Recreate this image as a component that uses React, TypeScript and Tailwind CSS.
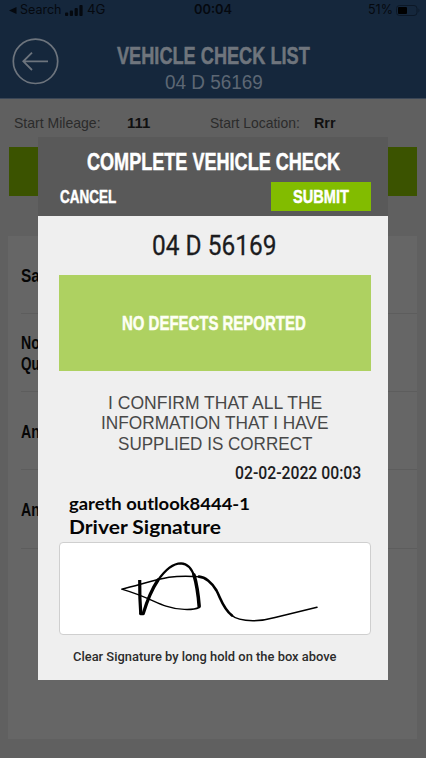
import { useLayoutEffect, useRef, useState } from "react";
import type { ReactNode } from "react";

const sans = "font-['Liberation_Sans',Arial,sans-serif]";
const din = "font-['Roboto',sans-serif]";
const ui = "font-['Inter',sans-serif]";
const human = "font-['Lato',sans-serif]";
const heavy = "[-webkit-text-stroke:0.5px_currentColor]";

/** One line of text, condensed or widened to fill exactly `width` pixels. */
function Fit({ width, className = "", children }: { width: number; className?: string; children: ReactNode }) {
  const ref = useRef<HTMLSpanElement>(null);
  const [scale, setScale] = useState(1);
  useLayoutEffect(() => {
    if (ref.current) setScale(width / ref.current.offsetWidth);
  }, [width]);
  return (
    <span className={`flex shrink-0 items-center ${className}`} style={{ width }}>
      <span ref={ref} className="shrink-0 origin-left whitespace-nowrap" style={{ transform: `scaleX(${scale})` }}>
        {children}
      </span>
    </span>
  );
}

function StatusBar() {
  return (
    <div className={`flex h-[20px] items-center pl-[9px] text-[12.5px] leading-none text-[#05090f] ${ui}`}>
      <svg className="h-[7px] w-[8px]" viewBox="0 0 8 7">
        <path d="M7.5 0v7L0 3.5z" fill="currentColor" />
      </svg>
      <Fit width={41} className="ml-[3px]">Search</Fit>
      <svg className="ml-[4px] h-[11px] w-[18px]" viewBox="0 0 18 11" fill="currentColor">
        <rect x="0" y="7.5" width="3.2" height="3.5" rx="1" />
        <rect x="4.8" y="5.5" width="3.2" height="5.5" rx="1" />
        <rect x="9.6" y="3" width="3.2" height="8" rx="1" />
        <rect x="14.4" y="0" width="3.2" height="11" rx="1" />
      </svg>
      <Fit width={18} className="ml-[4px]">4G</Fit>
      <Fit width={38} className="ml-[89px] font-semibold">00:04</Fit>
      <Fit width={25} className="ml-[136px]">51%</Fit>
      <svg className="ml-[3px] h-[11px] w-[25px]" viewBox="0 0 25 11">
        <rect x="0.5" y="0.5" width="20.5" height="10" rx="3" fill="none" stroke="#0c1827" />
        <rect x="2" y="2" width="9" height="7" rx="1" fill="#000" />
        <path d="M22.5 3.6c1.2.5 1.2 3.3 0 3.8z" fill="#0c1827" />
      </svg>
    </div>
  );
}

function Header() {
  return (
    <header className="h-[99px] border-b border-[#3a4656] bg-[#15273c]">
      <StatusBar />
      <div className="flex pl-[12px]">
        <svg className="mt-[18px] h-[47px] w-[47px] shrink-0 text-[#6d747d]" viewBox="0 0 47 47" fill="none" stroke="currentColor">
          <circle cx="23.5" cy="23.3" r="22.2" strokeWidth="1.7" />
          <path d="M36 23.3H11.5M20 14.6l-8.7 8.7 8.7 8.7" strokeWidth="1.8" />
        </svg>
        <div className={`ml-[58px] mt-[22px] flex w-[193px] flex-col items-center text-[#6f757d] ${sans}`}>
          <Fit width={193} className={`h-[28px] text-[24px] font-bold ${heavy}`}>VEHICLE CHECK LIST</Fit>
          <Fit width={98} className="h-[25px] text-[19.5px] text-[#5d6774]">04 D 56169</Fit>
        </div>
      </div>
    </header>
  );
}

function Row({ lines }: { lines: string[] }) {
  return (
    <div className="ml-[12.5px] flex h-[78.3px] flex-col justify-center border-b border-[#5d5d5d] pt-[3px]">
      {lines.map((line) => (
        <Fit key={line} width={18.5} className="h-[21px] text-[17.5px] font-bold text-[#060606]">
          {line}
        </Fit>
      ))}
    </div>
  );
}

function Signature() {
  return (
    <svg className="h-full w-full" viewBox="60 543 310 91" fill="none" stroke="#000" strokeLinecap="round" strokeLinejoin="round">
      <path d="M139.7 580C139.6 593 140 604 140.8 614" strokeWidth="3.2" strokeLinecap="butt" />
      <path d="M140.8 613.7H143.2C147 601 152 589 158 580" strokeWidth="3.2" />
      <path d="M157.5 581C165 570 173 563.4 181 563.4C188 563.6 192 569 194.5 577" strokeWidth="2.3" />
      <path d="M194 575C197 585 198.3 595 199.2 606.5" strokeWidth="3.5" />
      <path d="M199 607.5C193 610.5 177 610 166 606.2C155 602.5 145 596 121.7 589.2C139 585 156 579.5 169 577.3C180 575.8 191 576.2 200 576.8" strokeWidth="1.4" />
      <path d="M199 576.6C205 577 212 582.5 216.5 590.5C221 599 223 608.5 232 615.5" strokeWidth="2.6" />
      <path d="M231 614.8C237 620.5 246 620.8 254 620.7C262 620.6 268 619.5 275 617.5L317 607.2" strokeWidth="1.5" />
    </svg>
  );
}

function Dialog() {
  return (
    <section className="absolute left-[38px] top-[137px] w-[350px] bg-[#efefef]">
      <div className={`flex h-[79px] flex-col items-center bg-[#595959] pt-[11px] font-bold text-white ${sans}`}>
        <Fit width={253} className={`h-[28px] text-[24.5px] ${heavy}`}>COMPLETE VEHICLE CHECK</Fit>
        <div className="mt-[6px] flex h-[29px] w-full items-center justify-between pl-[22px] pr-[17px] text-[19px]">
          <Fit width={56} className={`pt-px ${heavy}`}>CANCEL</Fit>
          <button className="flex h-[29px] w-[100px] items-center justify-center bg-[#82bc00]">
            <Fit width={56} className={`pt-px ${heavy}`}>SUBMIT</Fit>
          </button>
        </div>
      </div>
      <div className="flex flex-col pb-[14px] pl-[21px] pr-[17px]">
        <Fit width={124} className={`mr-[3px] h-[59px] self-center text-[28px] text-[#1c1c1e] [-webkit-text-stroke:0.3px_currentColor] ${din}`}>
          04 D 56169
        </Fit>
        <div className={`flex h-[96px] items-center justify-center bg-[#aed161] pr-[2px] ${sans}`}>
          <Fit width={184} className={`text-[20px] font-bold text-[#fdfff4] ${heavy}`}>NO DEFECTS REPORTED</Fit>
        </div>
        <div className={`mt-[22px] flex flex-col items-center pr-[1px] text-[19px] text-[#484848] ${sans}`}>
          <Fit width={214} className="h-[20px]">I CONFIRM THAT ALL THE</Fit>
          <Fit width={228} className="h-[20px] pt-px">INFORMATION THAT I HAVE</Fit>
          <Fit width={194} className="h-[20px] pt-[2px]">SUPPLIED IS CORRECT</Fit>
        </div>
        <Fit width={126} className={`mr-[10px] mt-[10px] h-[20px] self-end text-[17.5px] font-medium text-[#1d1d1f] ${din}`}>
          02-02-2022 00:03
        </Fit>
        <div className={`ml-[10px] mt-[10px] flex flex-col font-bold text-[#050505] ${human}`}>
          <Fit width={181} className="h-[22px] text-[17px]">gareth outlook8444-1</Fit>
          <Fit width={152} className="h-[22px] pt-[3px] text-[18.5px]">Driver Signature</Fit>
        </div>
        <div className="mt-[5px] h-[93px] rounded-[4px] border border-[#cfcfcf] bg-white">
          <Signature />
        </div>
        <Fit width={264} className={`ml-[14px] mt-[11px] h-[20px] text-[13.5px] font-medium text-[#2b2b2b] ${din}`}>
          Clear Signature by long hold on the box above
        </Fit>
      </div>
    </section>
  );
}

export default function App() {
  return (
    <main className={`relative h-[758px] w-[426px] overflow-hidden bg-[#606060] ${sans}`}>
      <Header />
      <div className="flex h-[47.5px] items-center pl-[14px] text-[15px] text-[#2b2b2b]">
        <Fit width={87}>Start Mileage:</Fit>
        <Fit width={23} className="ml-[26px] font-bold text-[#101010]">111</Fit>
        <Fit width={90} className="ml-[60px]">Start Location:</Fit>
        <Fit width={22} className="ml-[14px] font-bold text-[#101010]">Rrr</Fit>
      </div>
      <div className="ml-[8.5px] mr-[9px] h-[49px] bg-[#3b5300]" />
      <div className="ml-[8px] mr-[9px] mt-[40px] h-[503.5px] bg-[#666666]">
        <Row lines={["Sa"]} />
        <Row lines={["No", "Qu"]} />
        <Row lines={["An"]} />
        <Row lines={["An "]} />
      </div>
      <Dialog />
    </main>
  );
}
